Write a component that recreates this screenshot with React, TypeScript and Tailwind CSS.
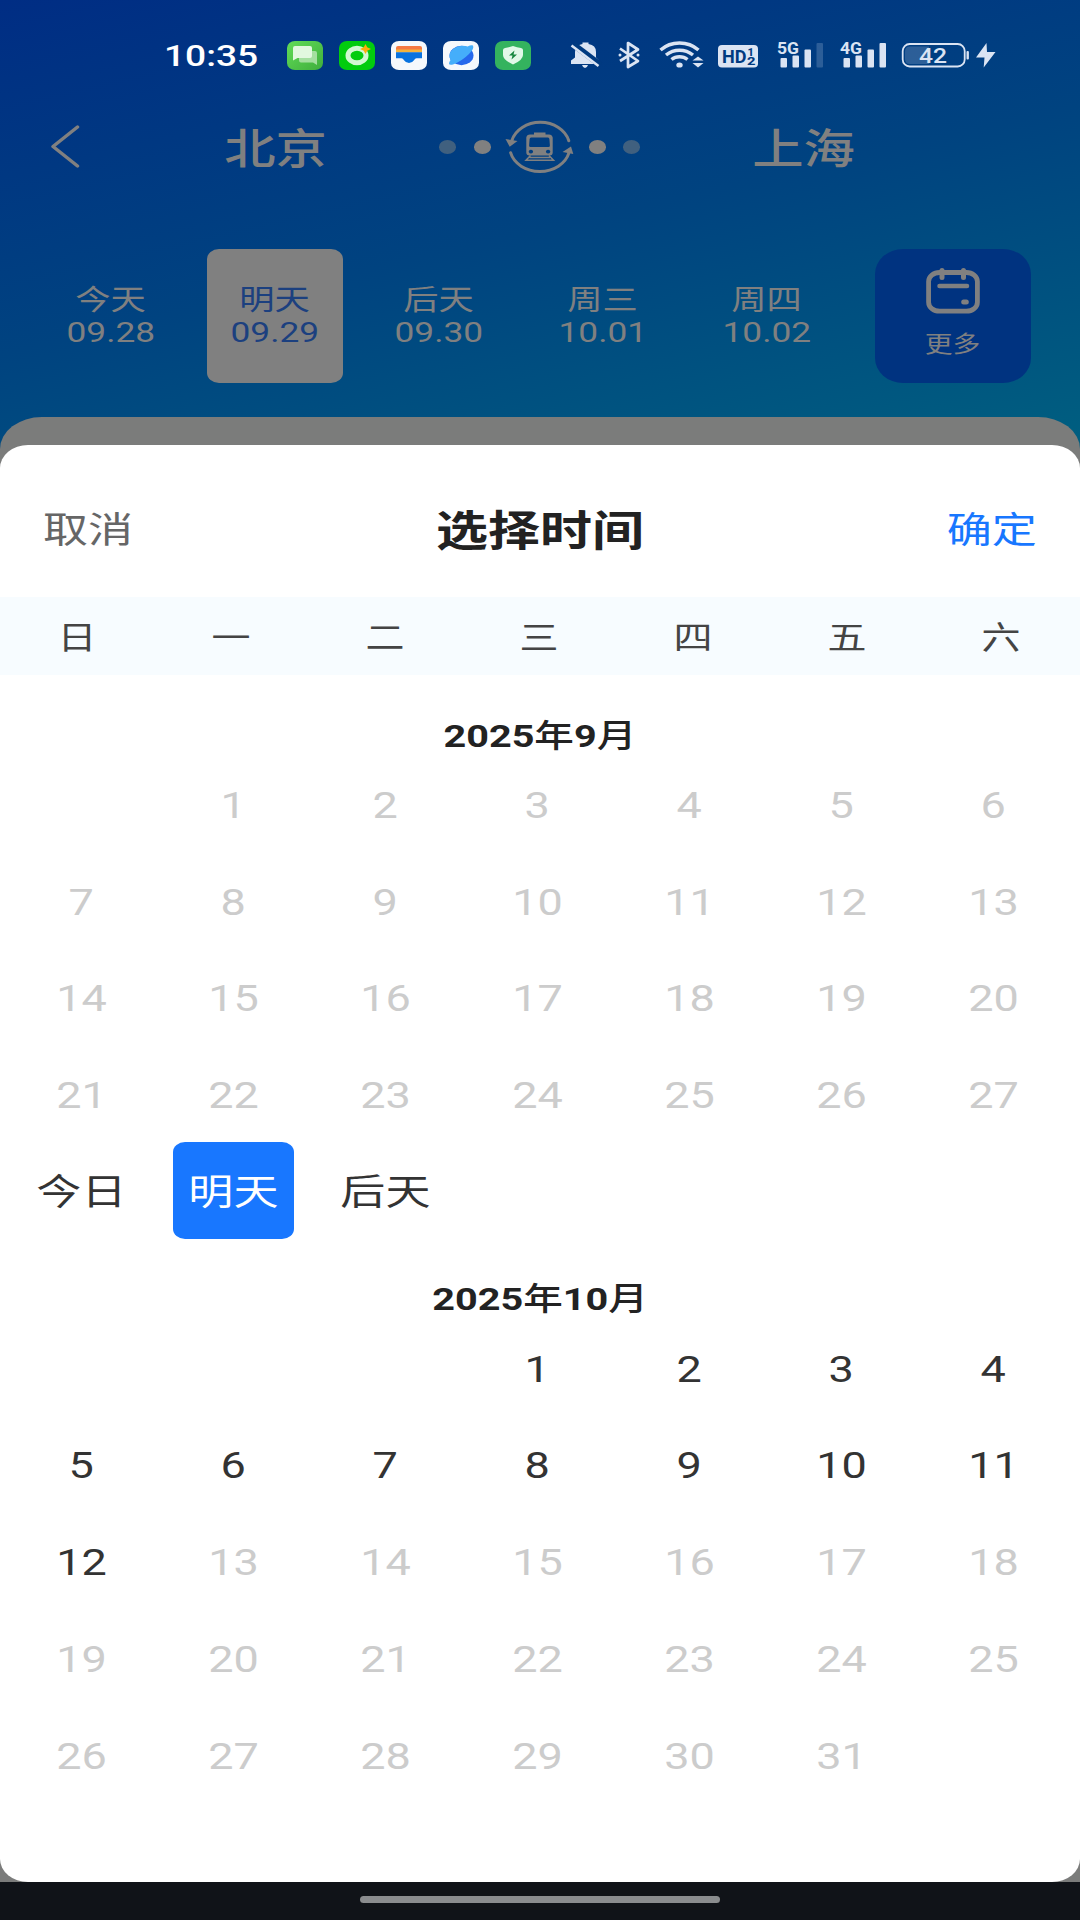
import React, { useState } from 'react';
import clsx from 'clsx';

interface Month {
  year: number;
  month: number;
  offset: number;
  days: number;
  labels?: { [day: number]: string };
  enabledFrom: number;
  enabledTo: number;
}

const weekdays = ['日', '一', '二', '三', '四', '五', '六'];

const months: Month[] = [
  {
    year: 2025,
    month: 9,
    offset: 1,
    days: 30,
    labels: { 28: '今日', 29: '明天', 30: '后天' },
    enabledFrom: 28,
    enabledTo: 30,
  },
  { year: 2025, month: 10, offset: 3, days: 31, enabledFrom: 1, enabledTo: 12 },
];

const quickDates = [
  { label: '今天', date: '09.28' },
  { label: '明天', date: '09.29' },
  { label: '后天', date: '09.30' },
  { label: '周三', date: '10.01' },
  { label: '周四', date: '10.02' },
];

// Wide text used all over the page
function Wide({ children, className }: { children: React.ReactNode; className?: string }) {
  return <span className={clsx('inline-block whitespace-nowrap scale-x-[1.2375]', className)}>{children}</span>;
}

function AppIcons() {
  return (
    <div className="flex gap-4">
      <svg width="36" height="29" viewBox="0 0 36 29">
        <defs>
          <linearGradient id="msg" x1="0" y1="0" x2="1" y2="1">
            <stop offset="0" stopColor="#62dc58" />
            <stop offset="1" stopColor="#3fae3c" />
          </linearGradient>
        </defs>
        <rect width="36" height="29" rx="8" ry="7" fill="url(#msg)" />
        <path d="M14 10h14q2 0 2 2v12l-4-2.500H14q-2 0-2-2V12q0-2 2-2z" fill="#a5dfa0" />
        <path d="M8 5h15q2 0 2 2v8q0 2-2 2H10.500L6 19.500V7q0-2 2-2z" fill="#e2f8df" />
      </svg>
      <svg width="36" height="29" viewBox="0 0 36 29">
        <rect width="36" height="29" rx="8" ry="7" fill="#02cc0e" />
        <ellipse cx="18" cy="14.500" rx="9" ry="7.300" fill="none" stroke="#d2f8d2" strokeWidth="5" />
        <path d="M26.500 3l1.700 3.300L32 8l-3.800 1.700L26.500 13l-1.700-3.300L21 8l3.800-1.700z" fill="#ffad0a" />
      </svg>
      <svg width="36" height="29" viewBox="0 0 36 29">
        <rect width="36" height="29" rx="8" ry="7" fill="#f5f8fc" />
        <path d="M7 5h22q2 0 2 2v3H5V7q0-2 2-2z" fill="#f57943" />
        <rect x="5" y="8.500" width="26" height="3" fill="#f3b33d" />
        <path d="M5 11.300h26v6h-5.500q-1.500 0-2.500 2-1.800 2.700-5 2.700t-5-2.700q-1-2-2.500-2H5z" fill="#0872df" />
      </svg>
      <svg width="36" height="29" viewBox="0 0 36 29">
        <rect width="36" height="29" rx="8" ry="7" fill="#f5f8fc" />
        <ellipse cx="18.500" cy="14.500" rx="12" ry="9.700" fill="#2567ec" />
        <path d="M30 4.500q1.500 3-4 8.500-7 7-16 10.500-4 1-4-1 0-1.500 1.500-3.500-3-6 2.500-11 7-5 14.500-2.500 4-2 5.500-1z" fill="#45aefa" />
      </svg>
      <svg width="36" height="29" viewBox="0 0 36 29">
        <rect width="36" height="29" rx="8" ry="7" fill="#34b35e" />
        <path d="M18 5q4 1.500 8 2 2 .3 2 2v5q0 5-10 9.500Q8 19 8 14V9q0-1.700 2-2 4-.5 8-2z" fill="#e1f8e8" />
        <path d="M19.500 9.500l-5.500 5h3.500l-1 4 5.500-5h-3.500z" fill="#14853d" />
      </svg>
    </div>
  );
}

function SystemIcons() {
  return (
    <svg width="430" height="30" viewBox="0 0 430 30" fill="#dbe4f3">
      {/* muted bell */}
      <path d="M1 20.500v3.500h28v-3.500l-3-3v-5.500q0-7-7.500-8V2.500h-6V4Q5 5.500 5 12v5.500zM12 25h6q-1 3-3 3t-3-3z" />
      <path d="M3.500 4.500l27 20.500" stroke="#003a80" strokeWidth="6" />
      <path d="M1.500 5.500l27 20.500" stroke="#dbe4f3" strokeWidth="2.500" />
      {/* bluetooth */}
      <path d="M50 8.500l18 12.500-10 6V3l10 6.500L50 21" fill="none" stroke="#dbe4f3" strokeWidth="2.700" strokeLinejoin="round" />
      <circle cx="50" cy="15" r="1.500" />
      <circle cx="68" cy="15" r="1.500" />
      {/* wifi */}
      <g fill="none" stroke="#dbe4f3" strokeWidth="3.500">
        <path d="M90.500 10q8-7 19-7t19 7" />
        <path d="M96 15q6-4.800 13.500-4.800T123 15" />
        <path d="M101.500 19.500q3.500-2.800 8-2.800t8 2.800" />
      </g>
      <ellipse cx="109.500" cy="25" rx="3.200" ry="2.600" />
      <path d="M122.500 20.500l5.500-4 5.500 4zM122.500 23l5.500 4.500 5.500-4.500z" />
      {/* HD */}
      <rect x="148" y="5" width="40" height="22.500" rx="4" />
      <text x="152" y="22.500" fontSize="18" fontWeight="700" fill="#003a80" textLength="24.500" lengthAdjust="spacingAndGlyphs">HD</text>
      <text x="177.500" y="15.500" fontSize="11" fontWeight="800" fill="#003a80">1</text>
      <text x="177" y="25" fontSize="10.500" fontWeight="800" fill="#003a80" textLength="8.500" lengthAdjust="spacingAndGlyphs">2</text>
      {/* 5G */}
      <text x="207" y="13.500" fontSize="16" fontWeight="700" textLength="22" lengthAdjust="spacingAndGlyphs">5G</text>
      <rect x="210.500" y="18" width="6.500" height="9.500" rx="1" />
      <rect x="222.500" y="15.500" width="6.500" height="12" rx="1" />
      <rect x="234.500" y="9.500" width="6.500" height="18" rx="1" />
      <rect x="246.500" y="3" width="6.500" height="24.500" rx="1" opacity=".2" />
      {/* 4G */}
      <text x="270" y="13.500" fontSize="16" fontWeight="700" textLength="22" lengthAdjust="spacingAndGlyphs">4G</text>
      <rect x="273.500" y="18" width="6.500" height="9.500" rx="1" />
      <rect x="285.500" y="15.500" width="6.500" height="12" rx="1" />
      <rect x="297.500" y="9.500" width="6.500" height="18" rx="1" />
      <rect x="309.500" y="3" width="6.500" height="24.500" rx="1" />
      {/* battery */}
      <rect x="332.700" y="4" width="62" height="22.500" rx="7" fill="none" stroke="#dbe4f3" strokeWidth="1.800" />
      <path d="M340 6.500h19v17.500h-19q-5 0-5-5v-7.500q0-5 5-5z" opacity=".2" />
      <rect x="396.500" y="11" width="2.400" height="8.500" rx="1" />
      <text x="349" y="22.500" fontSize="20" fontWeight="500" textLength="28" lengthAdjust="spacingAndGlyphs">42</text>
      <path d="M416.500 3l-10.500 14.500h8.500l-.8 10L425.500 12h-8.500z" />
    </svg>
  );
}

function TrainSwap() {
  return (
    <svg width="70" height="54" viewBox="0 0 70 54" fill="#808080">
      <g fill="none" stroke="#808080" strokeWidth="3" strokeLinecap="round">
        <path d="M6.800 20.700A29.400 24.300 0 0 1 63.800 20.700" />
        <path d="M5.600 32.700A30 24.300 0 0 0 64 32.700" />
      </g>
      <path d="M.5 19l12 2-7.800 5.700zM66 26.500l-8.500 5.500 10.800 2z" />
      <path d="M29 12.500h11.500v2H44q3 0 3.700 3v15q0 3-3 3H24.500q-3.200 0-3.200-3v-15q.5-3 3.700-3h4zM26 17.500q-1.200 0-1.400 1.500l-.5 6.500q0 1.500 1.400 1.500h18q1.400 0 1.400-1.500l-.5-6.500q-.2-1.500-1.400-1.500zM25.900 29.700a2.200 1.900 0 1 0 .01 0zM43.100 29.700a2.200 1.900 0 1 0 .01 0z" fillRule="evenodd" />
      <path d="M25.500 35.500l-4.500 4.700h27.500L44 35.500M24.500 37.600h20.500" fill="none" stroke="#808080" strokeWidth="1.500" />
    </svg>
  );
}

function CalendarIcon() {
  return (
    <svg width="54" height="46" viewBox="0 0 54 46" fill="none" stroke="#808080" strokeLinecap="round">
      <rect x="2.600" y="4.500" width="48.800" height="38.700" rx="11" ry="9" strokeWidth="4.800" />
      <path d="M16 2.500v7M37.500 2.500v7" strokeWidth="5" />
      <path d="M13.500 18h27.500" strokeWidth="4.500" />
      <path d="M37.700 34h2.600" strokeWidth="5" />
    </svg>
  );
}

function MonthView({ data, selected, onSelect }: { data: Month; selected: string; onSelect: (key: string) => void }) {
  return (
    <section>
      <h2 className="flex h-[79.500px] items-end justify-center text-[32px] leading-[37px] font-bold text-[#222]">
        <Wide>
          {data.year}
          <span className="font-medium">年</span>
          {data.month}
          <span className="font-medium">月</span>
        </Wide>
      </h2>
      <div className="grid auto-rows-[96.900px] grid-cols-7 pr-[11px] pl-[5px]">
        {Array.from({ length: data.offset }, (_, i) => <div key={`empty-${i}`} />)}
        {Array.from({ length: data.days }, (_, i) => i + 1).map((day) => {
          const key = `${data.month}-${day}`;
          const enabled = day >= data.enabledFrom && day <= data.enabledTo;
          return (
            <button
              key={day}
              disabled={!enabled}
              onClick={() => onSelect(key)}
              className={clsx(
                'mx-auto flex w-[121px] items-center justify-center rounded-[12px/10px] pt-[6px] text-[36.400px]',
                key === selected ? 'bg-[#1877ff] text-white' : enabled ? 'text-[#333]' : 'text-[#ccc]'
              )}
            >
              <Wide>{data.labels?.[day] ?? day}</Wide>
            </button>
          );
        })}
      </div>
    </section>
  );
}

export default function App() {
  const [selected, setSelected] = useState('9-29');

  return (
    <div className="flex h-[1920px] w-[1080px] flex-col overflow-hidden bg-[#7b7c7b] font-[Roboto,'Noto_Sans_CJK_SC',sans-serif]">
      <div className="h-[460px] shrink-0 bg-[linear-gradient(167deg,#002d84_0%,#004380_50%,#006080_100%)]">
        <div className="flex h-[110px] items-center pl-[173px]">
          <span className="w-[114px] text-[30px] font-medium text-white">
            <Wide>10:35</Wide>
          </span>
          <AppIcons />
          <div className="ml-[39px]">
            <SystemIcons />
          </div>
        </div>

        <div className="flex h-[74px] items-center pl-[50px] text-[41.500px] font-medium text-[#808080]">
          <svg width="31" height="44" viewBox="0 0 31 44" fill="none" stroke="#808080" strokeWidth="3.500" strokeLinecap="round" strokeLinejoin="round">
            <path d="M27.500 2L3 21.500 27.500 41" />
          </svg>
          <span className="ml-[95px] w-[200px] pt-[6px] text-center">
            <Wide>北京</Wide>
          </span>
          <div className="ml-[63px] flex items-center">
            <i className="h-[13.500px] w-[17px] rounded-[50%] bg-[#40607f]" />
            <i className="ml-[17.500px] h-[13.500px] w-[17px] rounded-[50%] bg-[#808080]" />
            <div className="mx-[14px]">
              <TrainSwap />
            </div>
            <i className="h-[13.500px] w-[17px] rounded-[50%] bg-[#808080]" />
            <i className="ml-[17.500px] h-[13.500px] w-[17px] rounded-[50%] bg-[#40607f]" />
          </div>
          <span className="ml-[64px] w-[200px] pt-[6px] text-center">
            <Wide>上海</Wide>
          </span>
        </div>

        <div className="mt-[65px] flex h-[133.500px] pl-[28.500px] text-[#808080]">
          {quickDates.map((item, index) => (
            <div key={item.date} className="flex w-[164px] justify-center">
              <div
                className={clsx(
                  'flex w-[136px] flex-col items-center justify-center rounded-[12px/10px] pt-[2px] text-[28.500px] leading-[32px]',
                  index === 1 && 'bg-[#808080] text-[#1c407f]'
                )}
              >
                <Wide>{item.label}</Wide>
                <Wide>{item.date}</Wide>
              </div>
            </div>
          ))}
          <div className="ml-[26.500px] flex w-[156px] flex-col items-center rounded-[28px/25px] bg-[#003380] pt-[19px]">
            <CalendarIcon />
            <Wide className="mt-[14px] text-[22.500px] leading-[32px]">更多</Wide>
          </div>
        </div>

        <div className="mt-[34px] h-[43.500px] rounded-t-[42px_32px] bg-[#7b7c7b]" />
      </div>

      <div className="relative -mt-[15px] h-[1436.500px] shrink-0 rounded-[28px/23px] bg-white">
        <div className="flex h-[152px] items-center justify-between pt-[20px] pr-[43px] pl-[43px]">
          <button className="w-[90px] text-left text-[36.400px] text-[#666]">
            <Wide className="origin-left">取消</Wide>
          </button>
          <h1 className="text-[42px] font-semibold text-[#222]">
            <Wide>选择时间</Wide>
          </h1>
          <button className="w-[90px] text-right text-[36.400px] text-[#1877ff]">
            <Wide className="origin-right">确定</Wide>
          </button>
        </div>
        <div className="grid h-[78px] grid-cols-7 items-center bg-[#f7fcff] pt-[6px] pr-[2px] text-center text-[31.500px] text-[#444]">
          {weekdays.map((day) => (
            <Wide key={day}>{day}</Wide>
          ))}
        </div>
        {months.map((item) => (
          <MonthView key={item.month} data={item} selected={selected} onSelect={setSelected} />
        ))}
      </div>

      <div className="flex flex-1 justify-center bg-[#101318] pt-[14px]">
        <div className="h-[7.500px] w-[360px] rounded-full bg-[#8a8c8e]" />
      </div>
    </div>
  );
}
